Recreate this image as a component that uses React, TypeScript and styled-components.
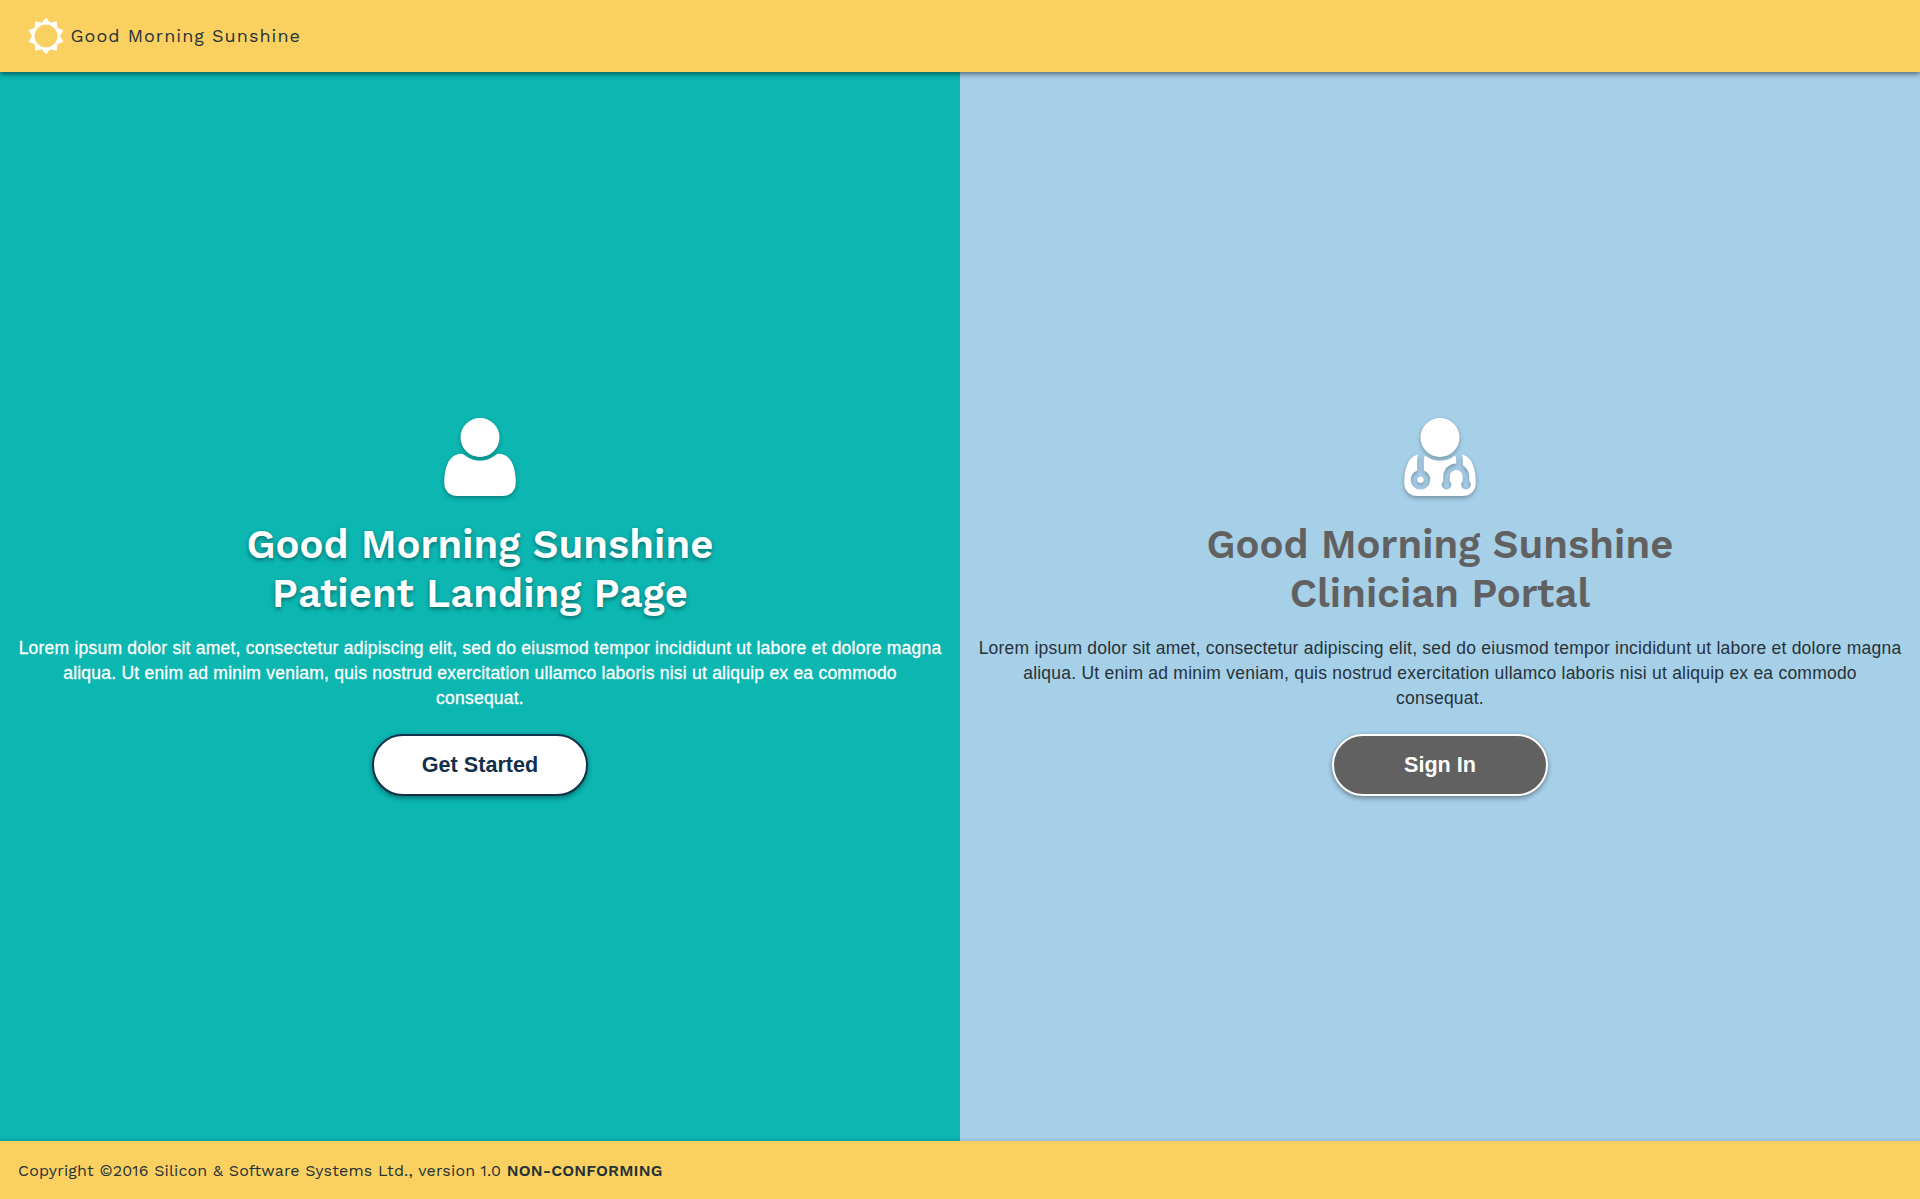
import React from "react";
import styled, { createGlobalStyle } from "styled-components";

const GlobalStyle = createGlobalStyle`
  * { box-sizing: border-box; }
  body { margin: 0; font-family: "Liberation Sans", Arial, sans-serif; color: #263238; }
`;

const display = `"Work Sans", Inter, sans-serif`;

const Page = styled.div`
  display: flex;
  flex-direction: column;
  height: 100vh;
  overflow: hidden;
  background: #fad160;
`;

const Header = styled.header`
  display: flex;
  align-items: center;
  flex: none;
  height: 72px;
  padding-left: 28px;
  gap: 6.5px;
  background: #fad160;
  box-shadow: 0 2px 5px rgba(0, 0, 0, 0.5);
  z-index: 1;
`;

const Brand = styled.span`
  font: 450 18px/24px ${display};
  letter-spacing: 1.03px;
  white-space: nowrap;
`;

const Main = styled.main`
  display: grid;
  grid-template-columns: 1fr 1fr;
  flex: 1;
`;

const Panel = styled.section<{ $bg: string; $color: string }>`
  display: flex;
  flex-direction: column;
  align-items: center;
  justify-content: center;
  padding: 0 18px;
  background: ${(p) => p.$bg};
  color: ${(p) => p.$color};
  text-align: center;
`;

const PanelIcon = styled.svg`
  width: 72px;
  height: 78px;
  fill: #fff;
  overflow: visible;
  filter: drop-shadow(0 2px 2px rgba(0, 0, 0, 0.3));
`;

const Title = styled.h1<{ $color: string; $shadow?: boolean }>`
  margin: 24px 0 0;
  font: 600 40px/49px ${display};
  letter-spacing: 0.06px;
  white-space: nowrap;
  color: ${(p) => p.$color};
  text-shadow: ${(p) => (p.$shadow ? "0 2px 4px rgba(0, 0, 0, 0.4)" : "none")};
`;

const Copy = styled.p<{ $heavy?: boolean }>`
  margin: 18px 0 0;
  font-size: 17.5px;
  line-height: 25px;
  letter-spacing: 0.225px;
  white-space: nowrap;
  -webkit-text-stroke: ${(p) => (p.$heavy ? "0.3px currentColor" : "0")};
`;

const Button = styled.button<{ $bg: string; $color: string; $border: string }>`
  width: 216px;
  height: 62px;
  margin-top: 23px;
  padding: 0;
  border: 2px solid ${(p) => p.$border};
  border-radius: 31px;
  background: ${(p) => p.$bg};
  color: ${(p) => p.$color};
  font: 700 21.6px "Liberation Sans", Arial, sans-serif;
  box-shadow: 0 2px 5px rgba(0, 0, 0, 0.4);
`;

const Footer = styled.footer`
  display: flex;
  align-items: center;
  flex: none;
  height: 58px;
  padding: 2px 0 0 18px;
  background: #fad160;
  box-shadow: 0 -1px 3px rgba(0, 0, 0, 0.15);
  z-index: 1;
`;

const Legal = styled.span`
  font: 400 16px/20px ${display};
  letter-spacing: 0.16px;
  white-space: nowrap;

  b {
    font-weight: 600;
  }
`;

const HEAD =
  "M1088 1024q0 -159 -112.5 -271.5t-271.5 -112.5t-271.5 112.5t-112.5 271.5t112.5 271.5t271.5 112.5t271.5 -112.5t112.5 -271.5z";
const PATIENT =
  "M1408 131q0 -120 -73 -189.5t-194 -69.5h-874q-121 0 -194 69.5t-73 189.5q0 53 3.5 103.5t14 109t26.5 108.5t43 97.5t62 81t85.5 53.5t111.5 20q9 0 42 -21.5t74.5 -48t108 -48t133.5 -21.5t133.5 21.5t108 48t74.5 48t42 21.5q61 0 111.5 -20t85.5 -53.5t62 -81t43 -97.5t26.5 -108.5t14 -109t3.5 -103.5z";
const CLINICIAN =
  "M384 192q0 -26 -19 -45t-45 -19t-45 19t-19 45t19 45t45 19t45 -19t19 -45zM1408 131q0 -121 -73 -190t-194 -69h-874q-121 0 -194 69t-73 190q0 68 5.5 131t24 138t47.5 132.5t81 103t120 60.5q-22 -52 -22 -120v-203q-58 -20 -93 -70t-35 -111q0 -80 56 -136t136 -56t136 56t56 136q0 61 -35.5 111t-92.5 70v203q0 62 25 93q132 -104 295 -104t295 104q25 -31 25 -93v-64q-106 0 -181 -75t-75 -181v-89q-32 -29 -32 -71q0 -40 28 -68t68 -28t68 28t28 68q0 42 -32 71v89q0 52 38 90t90 38t90 -38t38 -90v-89q-32 -29 -32 -71q0 -40 28 -68t68 -28t68 28t28 68q0 42 -32 71v89q0 68 -34.5 127.5t-93.5 93.5q0 10 .5 42.5t0 48t-2.5 41.5t-7 47t-13 40q68 -15 120 -60.5t81 -103t47.5 -132.5t24 -138t5.5 -131z";

const Person = ({ body }: { body: string }) => (
  <PanelIcon viewBox="0 -1408 1408 1536">
    <path transform="scale(1 -1)" d={body + HEAD} />
  </PanelIcon>
);

const rays = Array.from({ length: 20 }, (_, i) => {
  const r = i % 2 ? 14 : 18.3;
  const a = (i * Math.PI) / 10;
  return `${(18 + r * Math.sin(a)).toFixed(2)} ${(18 - r * Math.cos(a)).toFixed(2)}`;
}).join("L");

const Sun = () => (
  <svg width="36" height="36" viewBox="0 0 36 36" overflow="visible">
    <path fill="#fff" fillRule="evenodd" d={`M${rays}ZM6.6 18a11.4 11.4 0 1 0 22.8 0a11.4 11.4 0 1 0 -22.8 0Z`} />
  </svg>
);

const Lorem = ({ heavy }: { heavy?: boolean }) => (
  <Copy $heavy={heavy}>
    Lorem ipsum dolor sit amet, consectetur adipiscing elit, sed do eiusmod tempor incididunt ut labore et dolore magna
    <br />
    aliqua. Ut enim ad minim veniam, quis nostrud exercitation ullamco laboris nisi ut aliquip ex ea commodo
    <br />
    consequat.
  </Copy>
);

export default function App() {
  return (
    <Page>
      <GlobalStyle />
      <Header>
        <Sun />
        <Brand>Good Morning Sunshine</Brand>
      </Header>
      <Main>
        <Panel $bg="#0cb6b1" $color="#fff">
          <Person body={PATIENT} />
          <Title $color="#fff" $shadow>
            Good Morning Sunshine
            <br />
            Patient Landing Page
          </Title>
          <Lorem heavy />
          <Button $bg="#fff" $color="#12304a" $border="#12304a">Get Started</Button>
        </Panel>
        <Panel $bg="#a6cfe8" $color="#263238">
          <Person body={CLINICIAN} />
          <Title $color="#616161">
            Good Morning Sunshine
            <br />
            Clinician Portal
          </Title>
          <Lorem />
          <Button $bg="#616161" $color="#fff" $border="#fff">Sign In</Button>
        </Panel>
      </Main>
      <Footer>
        <Legal>
          Copyright ©2016 Silicon &amp; Software Systems Ltd., version 1.0 <b>NON-CONFORMING</b>
        </Legal>
      </Footer>
    </Page>
  );
}
